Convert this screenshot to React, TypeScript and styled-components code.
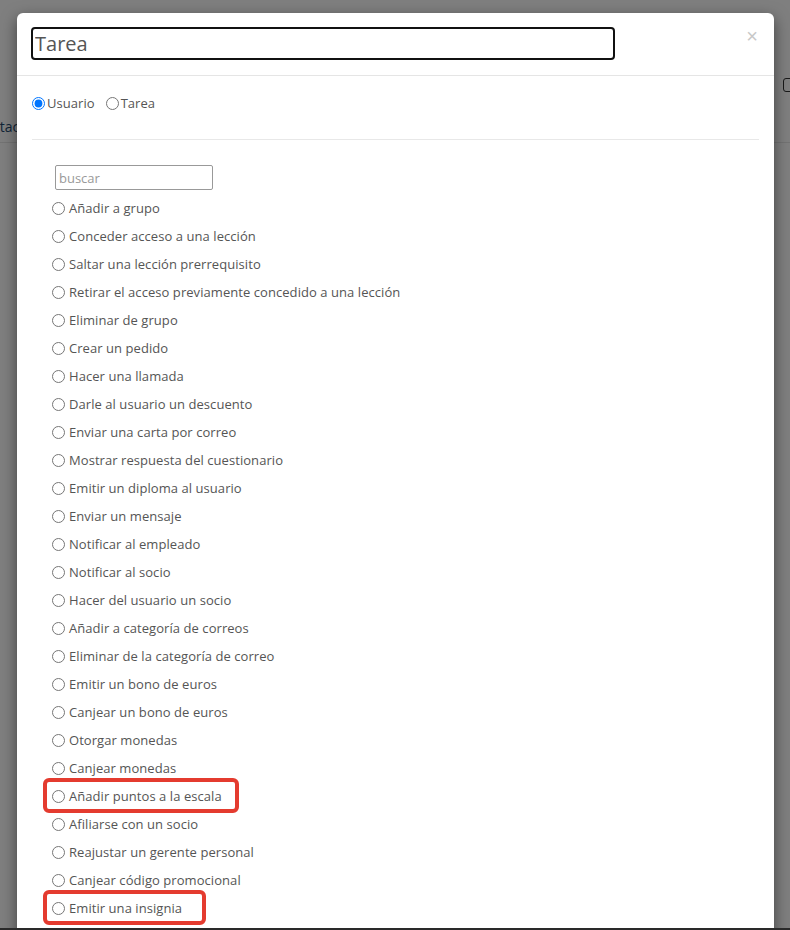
import React from "react";
import styled, { createGlobalStyle } from "styled-components";

const GlobalStyle = createGlobalStyle`
  html, body { margin: 0; padding: 0; }
  body {
    font-family: "Open Sans", "Liberation Sans", sans-serif;
    background: #fff;
    overflow: hidden;
  }
  * { box-sizing: border-box; }
`;

const Page = styled.div`
  position: relative;
  width: 790px;
  height: 930px;
  overflow: hidden;
  background: #fff;
`;

const BehindHeader = styled.div`
  height: 143px;
  border-bottom: 1px solid #e6e6e6;
  display: flex;
  align-items: flex-end;
  justify-content: space-between;
  padding: 0 0 6px 0;
`;

const BehindLink = styled.span`
  font-size: 14px;
  color: #1f4a70;
  margin-left: -26px;
`;

const BehindBox = styled.span`
  width: 14px;
  height: 14px;
  border: 1px solid #333;
  border-radius: 3px;
  margin-right: -7px;
  align-self: flex-start;
  margin-top: 78px;
`;

const Overlay = styled.div`
  position: absolute;
  inset: 0;
  background: rgba(0, 0, 0, 0.5);
  padding: 13px 16px 0 17px;
`;

const Modal = styled.div`
  background: #fff;
  border-radius: 6px;
  box-shadow: 0 5px 15px rgba(0, 0, 0, 0.5);
  height: 1000px;
`;

const Header = styled.div`
  display: flex;
  align-items: flex-start;
  padding: 14px 15px 15px 14px;
  border-bottom: 1px solid #e5e5e5;
`;

const TitleInput = styled.input`
  width: 584px;
  height: 33px;
  border: 2px solid #111;
  border-radius: 4px;
  font-family: inherit;
  font-size: 20px;
  color: #555;
  padding: 0 2px;
  outline: none;
`;

const Close = styled.button`
  margin-left: auto;
  margin-top: -1px;
  margin-right: 1px;
  border: none;
  background: none;
  padding: 0;
  font-size: 20px;
  line-height: 1;
  color: #c8c8c8;
  font-family: "Liberation Sans", sans-serif;
  cursor: pointer;
`;

const Body = styled.div`
  padding: 15px;
`;

const ModeRow = styled.div`
  display: flex;
  align-items: center;
  height: 24px;
  gap: 11px;
`;

const Label = styled.label`
  display: inline-flex;
  align-items: center;
  font-size: 13px;
  letter-spacing: 0.05px;
  color: #555;
  gap: 2px;
`;

const Radio = styled.input.attrs({ type: "radio" })`
  margin: 0;
  width: 13px;
  height: 13px;
`;

const Divider = styled.hr`
  border: none;
  border-top: 1px solid #e8e8e8;
  margin: 24px 0 0 0;
`;

const List = styled.div`
  padding: 25px 0 0 20px;
  display: flex;
  flex-direction: column;
`;

const Search = styled.input`
  width: 158px;
  height: 25px;
  margin-left: 3px;
  margin-bottom: 4px;
  border: 1px solid #999;
  border-radius: 2px;
  font-family: inherit;
  font-size: 13px;
  color: #555;
  padding: 0 3px;
  outline: none;
  &::placeholder { color: #999; }
`;

const Item = styled.label<{ $mark?: number }>`
  position: relative;
  display: flex;
  align-items: center;
  height: 28px;
  gap: 4px;
  font-size: 13px;
  letter-spacing: 0.06px;
  color: #555;
  width: max-content;

  &::before {
    content: "";
    display: ${(p) => (p.$mark !== undefined ? "block" : "none")};
    position: absolute;
    left: -9px;
    right: ${(p) => -(p.$mark ?? 0)}px;
    top: -4px;
    bottom: -3px;
    border: 4px solid #e43b2f;
    border-radius: 6px;
  }
`;

const BottomEdge = styled.div`
  position: absolute;
  left: 0;
  right: 0;
  bottom: 0;
  height: 2px;
  background: #2a2a2a;
`;

const items: { text: string; mark?: number }[] = [
  { text: "Añadir a grupo" },
  { text: "Conceder acceso a una lección" },
  { text: "Saltar una lección prerrequisito" },
  { text: "Retirar el acceso previamente concedido a una lección" },
  { text: "Eliminar de grupo" },
  { text: "Crear un pedido" },
  { text: "Hacer una llamada" },
  { text: "Darle al usuario un descuento" },
  { text: "Enviar una carta por correo" },
  { text: "Mostrar respuesta del cuestionario" },
  { text: "Emitir un diploma al usuario" },
  { text: "Enviar un mensaje" },
  { text: "Notificar al empleado" },
  { text: "Notificar al socio" },
  { text: "Hacer del usuario un socio" },
  { text: "Añadir a categoría de correos" },
  { text: "Eliminar de la categoría de correo" },
  { text: "Emitir un bono de euros" },
  { text: "Canjear un bono de euros" },
  { text: "Otorgar monedas" },
  { text: "Canjear monedas" },
  { text: "Añadir puntos a la escala", mark: 17 },
  { text: "Afiliarse con un socio" },
  { text: "Reajustar un gerente personal" },
  { text: "Canjear código promocional" },
  { text: "Emitir una insignia", mark: 24 },
  { text: "Otorgar un certificado" },
];

export default function App() {
  return (
    <>
      <GlobalStyle />
      <Page>
        <BehindHeader>
          <BehindLink>Contactos</BehindLink>
          <BehindBox />
        </BehindHeader>
        <Overlay>
          <Modal>
            <Header>
              <TitleInput defaultValue="Tarea" />
              <Close aria-label="Cerrar">×</Close>
            </Header>
            <Body>
              <ModeRow>
                <Label>
                  <Radio name="mode" defaultChecked />
                  Usuario
                </Label>
                <Label>
                  <Radio name="mode" />
                  Tarea
                </Label>
              </ModeRow>
              <Divider />
              <List>
                <Search placeholder="buscar" />
                {items.map((it) => (
                  <Item key={it.text} $mark={it.mark}>
                    <Radio name="action" />
                    {it.text}
                  </Item>
                ))}
              </List>
            </Body>
          </Modal>
        </Overlay>
        <BottomEdge />
      </Page>
    </>
  );
}
